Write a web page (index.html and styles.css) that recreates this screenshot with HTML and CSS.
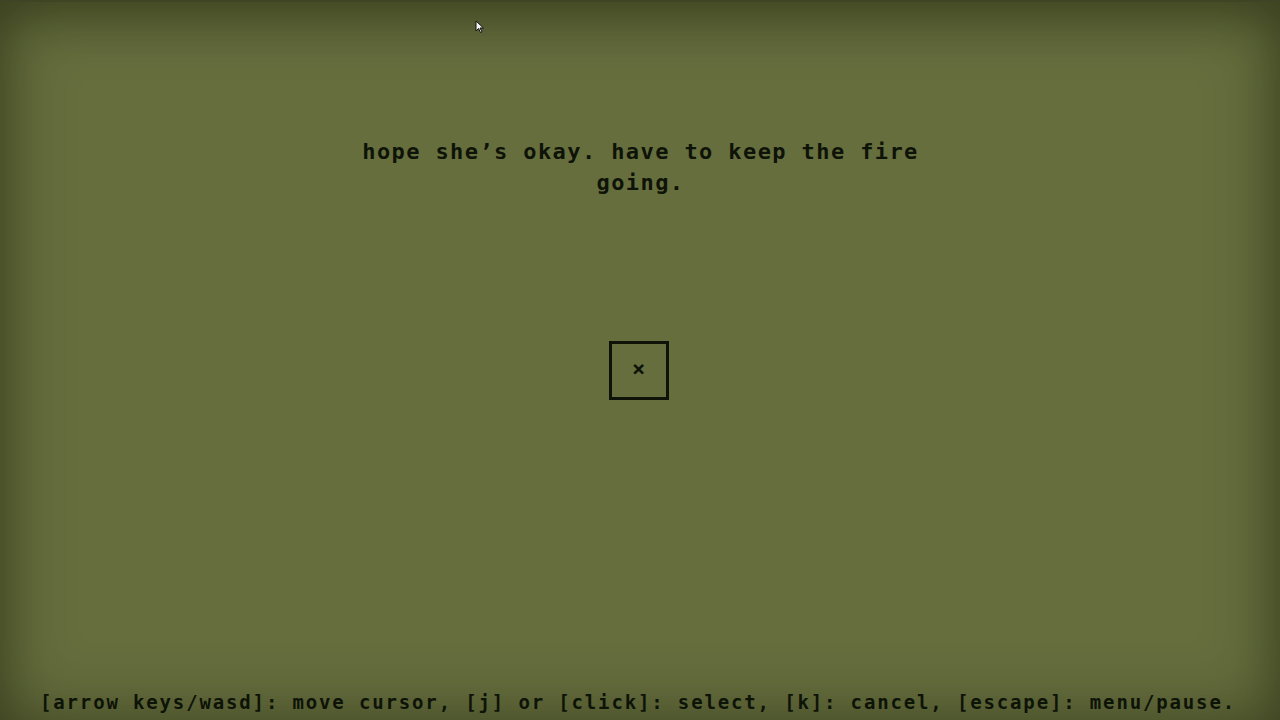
FILE: index.html
```html
<!DOCTYPE html>
<html>
<head>
<meta charset="utf-8">
<link rel="stylesheet" href="styles.css">
</head>
<body>
<div class="screen">
  <div class="dialog">
    <div>hope she’s okay. have to keep the fire</div>
    <div>going.</div>
  </div>
  <div class="box"><span class="mark">×</span></div>
  <div class="help">[arrow keys/wasd]: move cursor, [j] or [click]: select, [k]: cancel, [escape]: menu/pause.</div>
  <svg class="cursor" width="10" height="14" viewBox="0 0 10 14"><path d="M1 1 L1 11 L3.5 8.5 L5.5 12.5 L7 11.8 L5 8 L8.5 8 Z" fill="#f2f2f2" stroke="#111" stroke-width="1"/></svg>
</div>
</body>
</html>
```
FILE: styles.css
```css
html, body {
  margin: 0;
  padding: 0;
  background: #666e3e;
}
.screen {
  position: relative;
  width: 1280px;
  height: 720px;
  box-sizing: border-box;
  display: flex;
  flex-direction: column;
  align-items: center;
  background: #666e3e;
  box-shadow: inset 0 0 70px rgba(20, 25, 5, 0.45), inset 0 18px 40px rgba(20, 25, 5, 0.25);
  border-top: 2px solid #3e4424;
  font-family: "DejaVu Sans Mono", "Liberation Mono", monospace;
  font-weight: bold;
  color: #0e1308;
  overflow: hidden;
}
.dialog {
  margin-top: 134px;
  font-size: 22px;
  line-height: 31px;
  letter-spacing: 1.4px;
  text-align: center;
  padding-left: 1px;
}
.box {
  margin-top: 143px;
  margin-left: -3px;
  width: 54px;
  height: 53px;
  border: 3px solid #0e1308;
  display: flex;
  align-items: center;
  justify-content: center;
}
.mark {
  font-size: 22px;
  line-height: 1;
  margin-top: -3px;
}
.help {
  margin-top: auto;
  margin-bottom: 7px;
  margin-right: 4px;
  font-size: 19px;
  letter-spacing: 1.85px;
  line-height: 22px;
}
.cursor {
  position: absolute;
  left: 475px;
  top: 18px;
}
```
